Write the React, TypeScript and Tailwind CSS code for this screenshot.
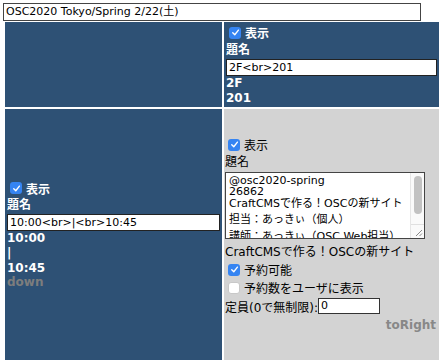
import React from "react";

const Check = ({ checked }: { checked: boolean }) =>
  checked ? (
    <span className="inline-flex w-[12px] h-[12px] rounded-[3px] bg-[#3584f2] items-center justify-center shrink-0">
      <svg viewBox="0 0 12 12" className="w-[11px] h-[11px]">
        <path d="M3 6.3 L5.2 8.5 L9.2 3.4" stroke="white" strokeWidth="1.5" fill="none" strokeLinecap="round" strokeLinejoin="round" />
      </svg>
    </span>
  ) : (
    <span className="inline-block w-[12px] h-[12px] rounded-[3px] bg-white border border-[#c8c8c8] shrink-0" />
  );

const CheckRow = ({ checked, label, className = "" }: { checked: boolean; label: string; className?: string }) => (
  <div className={`flex items-center h-[18px] ${className}`}>
    <span className="ml-[3px] mr-[4px] flex">
      <Check checked={checked} />
    </span>
    <span>{label}</span>
  </div>
);

export default function App() {
  return (
    <div className="w-[441px] h-[362px] overflow-hidden bg-white text-[12px] leading-[normal] font-['DejaVu_Sans','Noto_Sans_CJK_JP',sans-serif]">
      <div className="ml-[3px] mt-[3px] w-[418px] h-[18px] border border-[#444] bg-white px-[2px] text-[11px] leading-[16px] text-black whitespace-nowrap">
        OSC2020 Tokyo/Spring 2/22(土)
      </div>
      <div className="ml-[5px] mt-[1px] grid grid-cols-[217px_215px] grid-rows-[85px_251px] gap-[2px]">
        <div className="bg-[#2e5175]" />
        <div className="bg-[#2e5175] flex flex-col justify-center px-[2px] text-white font-bold">
          <CheckRow checked label="表示" />
          <div className="h-[17px] leading-[17px]">題名</div>
          <div className="h-[17px] border border-[#222] bg-white text-black font-normal text-[11px] leading-[15px] px-[2px]">
            2F&lt;br&gt;201
          </div>
          <div className="leading-[14.7px]">2F</div>
          <div className="leading-[14.7px]">201</div>
        </div>
        <div className="bg-[#2e5175] flex flex-col justify-center px-[2px] text-white font-bold">
          <CheckRow checked label="表示" />
          <div className="h-[17px] leading-[17px]">題名</div>
          <div className="h-[17px] border border-[#222] bg-white text-black font-normal text-[11px] leading-[15px] px-[2px] whitespace-nowrap">
            10:00&lt;br&gt;|&lt;br&gt;10:45
          </div>
          <div className="leading-[14.7px]">10:00</div>
          <div className="leading-[14.7px]">|</div>
          <div className="leading-[14.7px]">10:45</div>
          <div className="leading-[14.7px] text-[#7d7d7d]">down</div>
        </div>
        <div className="bg-[#d3d3d3] flex flex-col justify-center px-[1px] text-black">
          <CheckRow checked label="表示" />
          <div className="h-[17px] leading-[17px]">題名</div>
          <div className="relative mt-[1px] w-[200px] h-[67px] border border-[#444] bg-white overflow-hidden text-[11px] pl-[3px] pt-[2px] whitespace-nowrap">
            <div className="leading-[11px]">@osc2020-spring</div>
            <div className="leading-[11px]">26862</div>
            <div className="leading-[14px]">CraftCMSで作る！OSCの新サイト</div>
            <div className="leading-[17px]">担当：あっきぃ（個人）</div>
            <div className="leading-[17px]">講師：あっきぃ（OSC Web担当）</div>
            <div className="absolute right-0 top-0 bottom-0 w-[14px] bg-[#fafafa] border-l border-[#e6e6e6]">
              <div className="mx-auto mt-[3px] w-[8px] h-[38px] rounded-[4px] bg-[#c2c2c2]" />
              <div className="absolute left-0 right-0 bottom-0 h-[14px] border-t border-[#e0e0e0] bg-[#fafafa]">
                <svg viewBox="0 0 14 14" className="w-[14px] h-[14px]">
                  <path d="M11 5 L5 11 M11 8.5 L8.5 11" stroke="#8a8a8a" strokeWidth="1" fill="none" />
                </svg>
              </div>
            </div>
          </div>
          <div className="mt-[5px] h-[17px] leading-[17px] whitespace-nowrap">CraftCMSで作る！OSCの新サイト</div>
          <CheckRow checked label="予約可能" className="h-[17px]" />
          <CheckRow checked={false} label="予約数をユーザに表示" />
          <div className="flex items-center h-[19px] whitespace-nowrap">
            <span>定員(0で無制限):</span>
            <div className="w-[62px] h-[16px] border border-[#333] bg-white text-[11px] leading-[14px] px-[2px]">0</div>
          </div>
          <div className="h-[18px] leading-[18px] text-right pr-[2px] font-bold text-[#888]">toRight</div>
        </div>
      </div>
    </div>
  );
}
